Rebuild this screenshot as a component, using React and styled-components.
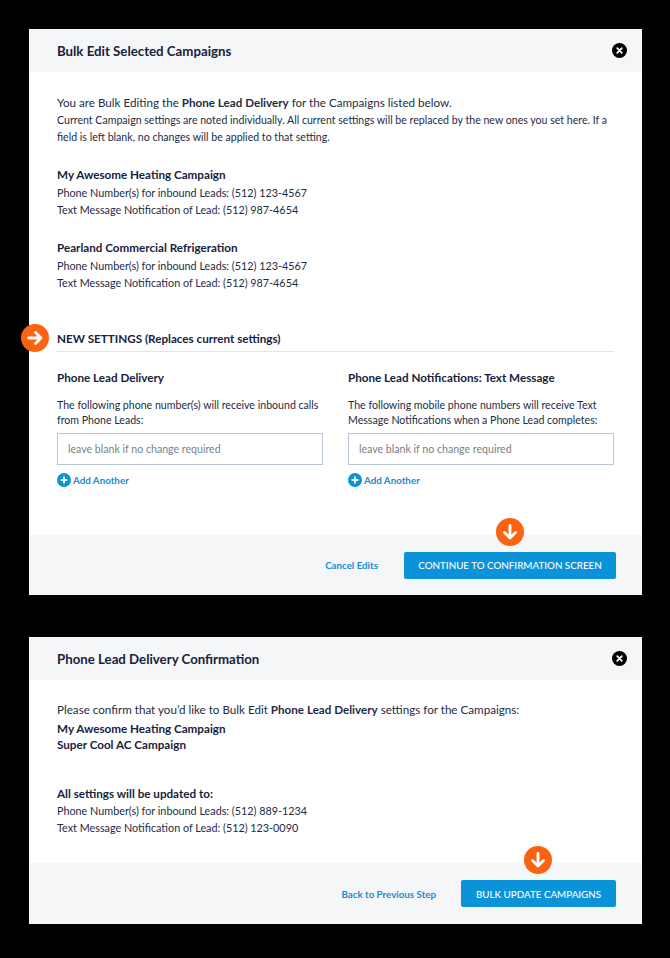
import React from "react";
import styled, { createGlobalStyle } from "styled-components";

const GlobalStyle = createGlobalStyle`
	html, body {
		margin: 0;
		padding: 0;
		background: #000;
	}
	body {
		font-family: Lato, "Open Sans", sans-serif;
		color: #1d2b45;
	}
`;

const Page = styled.main`
	width: 670px;
	height: 958px;
	box-sizing: border-box;
	padding: 29px 28px 0 29px;
	display: flex;
	flex-direction: column;
	gap: 42px;
	background: #000;
`;

const Modal = styled.section`
	position: relative;
	background: #fff;
	height: ${(p) => p.$height}px;
	display: flex;
	flex-direction: column;
`;

const Header = styled.header`
	height: 43px;
	flex: none;
	background: #f5f6f8;
	display: flex;
	align-items: center;
	justify-content: space-between;
	padding: 0 15px 0 28px;
`;

const Title = styled.h2`
	margin: 0;
	font-size: 13.25px;
	font-weight: 700;
	color: #16233d;
`;

const Body = styled.div`
	flex: 1;
	padding: ${(p) => p.$top}px 28px 0 28px;
`;

const Intro = styled.p`
	margin: 0;
	font-size: 11.65px;
	line-height: 18px;
	b {
		font-weight: 700;
	}
`;

const Note = styled.p`
	margin: 0;
	font-size: 10.6px;
	line-height: 17px;
	width: 556px;
`;

const Group = styled.div`
	margin-top: ${(p) => p.$top}px;
`;

const GroupName = styled.h3`
	margin: 0 0 ${(p) => p.$after ?? 1}px;
	font-size: 11.67px;
	line-height: 18px;
	font-weight: 700;
	color: #16233d;
`;

const CampaignName = styled.div`
	font-size: 11.67px;
	line-height: 16px;
	font-weight: 700;
	color: #16233d;
`;

const InfoLine = styled.div`
	font-size: 10.8px;
	line-height: 17px;
`;

const SectionHead = styled.h3`
	margin: 37px 0 0;
	padding-bottom: 3px;
	font-size: 11.67px;
	line-height: 20px;
	font-weight: 700;
	color: #16233d;
	border-bottom: 1px solid #e2e5ea;
`;

const Columns = styled.div`
	display: grid;
	grid-template-columns: 266px 266px;
	gap: 25px;
	margin-top: 16px;
`;

const FieldTitle = styled.h4`
	margin: 0 0 12px;
	font-size: 11.67px;
	line-height: 18px;
	font-weight: 700;
	color: #16233d;
`;

const FieldHelp = styled.p`
	margin: 0 0 5px;
	font-size: 10.6px;
	line-height: 15px;
`;

const Field = styled.input`
	display: block;
	width: 100%;
	height: 32px;
	box-sizing: border-box;
	border: 1px solid #b9c6d6;
	border-radius: 0;
	padding: 0 10px;
	font-family: inherit;
	font-size: 10.6px;
	outline: none;
	&::placeholder {
		color: #7a7f87;
		opacity: 1;
	}
`;

const AddLink = styled.a`
	display: flex;
	align-items: center;
	gap: 2px;
	margin-top: 8px;
	font-size: 9.8px;
	line-height: 14px;
	font-weight: 700;
	color: #1a8bd0;
`;

const Footer = styled.footer`
	flex: none;
	height: ${(p) => p.$height}px;
	background: #f5f6f8;
	display: flex;
	align-items: center;
	justify-content: flex-end;
	gap: ${(p) => p.$gap}px;
	padding: 0 26px 0 0;
`;

const TextLink = styled.a`
	font-size: 9.75px;
	font-weight: 700;
	color: #1a8bd0;
`;

const Primary = styled.button`
	height: 27px;
	width: ${(p) => p.$width}px;
	border: 0;
	border-radius: 2px;
	background: #0b93d9;
	color: #fff;
	font-family: inherit;
	font-size: 9.8px;
	font-weight: 500;
	padding: 0;
`;

const Badge = styled.span`
	position: absolute;
	left: ${(p) => p.$left}px;
	top: ${(p) => p.$top}px;
	width: 28px;
	height: 28px;
	line-height: 0;
`;

const CloseIcon = () => (
	<svg width="15" height="15" viewBox="0 0 15 15">
		<circle cx="7.5" cy="7.5" r="7.5" fill="#000" />
		<path d="M5.2 5.2l4.6 4.6M9.8 5.2l-4.6 4.6" stroke="#fff" strokeWidth="1.8" strokeLinecap="round" />
	</svg>
);

const PlusIcon = () => (
	<svg width="14" height="14" viewBox="0 0 14 14">
		<circle cx="7" cy="7" r="7" fill="#0b93d9" />
		<path d="M7 3.6v6.8M3.6 7h6.8" stroke="#fff" strokeWidth="1.8" />
	</svg>
);

const ArrowBadge = ({ left, top, down }) => (
	<Badge $left={left} $top={top}>
		<svg width="28" height="28" viewBox="0 0 28 28">
			<circle cx="14" cy="14" r="14" fill="#fb6312" />
			<g transform={down ? "rotate(90 14 14)" : undefined}>
				<path
					d="M7.5 14h12M14.5 8.5l5.5 5.5-5.5 5.5"
					fill="none"
					stroke="#fff"
					strokeWidth="2.8"
					strokeLinecap="round"
					strokeLinejoin="round"
				/>
			</g>
		</svg>
	</Badge>
);

const campaigns = [
	{ name: "My Awesome Heating Campaign", top: 19 },
	{ name: "Pearland Commercial Refrigeration", top: 20 },
];

const fields = [
	{
		title: "Phone Lead Delivery",
		help: "The following phone number(s) will receive inbound calls from Phone Leads:",
	},
	{
		title: "Phone Lead Notifications: Text Message",
		help: "The following mobile phone numbers will receive Text Message Notifications when a Phone Lead completes:",
	},
];

export default function App() {
	return (
		<Page>
			<GlobalStyle />
			<Modal $height={566}>
				<Header>
					<Title>Bulk Edit Selected Campaigns</Title>
					<CloseIcon />
				</Header>
				<Body $top={22}>
					<Intro>
						You are Bulk Editing the <b>Phone Lead Delivery</b> for the Campaigns listed below.
					</Intro>
					<Note>
						Current Campaign settings are noted individually. All current settings will be replaced by the new
						ones you set here. If a field is left blank, no changes will be applied to that setting.
					</Note>
					{campaigns.map((c) => (
						<Group key={c.name} $top={c.top}>
							<GroupName>{c.name}</GroupName>
							<InfoLine>Phone Number(s) for inbound Leads: (512) 123-4567</InfoLine>
							<InfoLine>Text Message Notification of Lead: (512) 987-4654</InfoLine>
						</Group>
					))}
					<SectionHead>NEW SETTINGS (Replaces current settings)</SectionHead>
					<Columns>
						{fields.map((f) => (
							<div key={f.title}>
								<FieldTitle>{f.title}</FieldTitle>
								<FieldHelp>{f.help}</FieldHelp>
								<Field placeholder="leave blank if no change required" />
								<AddLink>
									<PlusIcon />
									Add Another
								</AddLink>
							</div>
						))}
					</Columns>
				</Body>
				<Footer $height={60} $gap={26}>
					<TextLink>Cancel Edits</TextLink>
					<Primary $width={212}>CONTINUE TO CONFIRMATION SCREEN</Primary>
				</Footer>
				<ArrowBadge left={-8} top={295} />
				<ArrowBadge left={467} top={489} down />
			</Modal>
			<Modal $height={287}>
				<Header>
					<Title>Phone Lead Delivery Confirmation</Title>
					<CloseIcon />
				</Header>
				<Body $top={21}>
					<Intro>
						Please confirm that you’d like to Bulk Edit <b>Phone Lead Delivery</b> settings for the Campaigns:
					</Intro>
					<Group $top={1}>
						<CampaignName>My Awesome Heating Campaign</CampaignName>
						<CampaignName>Super Cool AC Campaign</CampaignName>
					</Group>
					<Group $top={32}>
						<GroupName $after={0}>All settings will be updated to:</GroupName>
						<InfoLine>Phone Number(s) for inbound Leads: (512) 889-1234</InfoLine>
						<InfoLine>Text Message Notification of Lead: (512) 123-0090</InfoLine>
					</Group>
				</Body>
				<Footer $height={61} $gap={25}>
					<TextLink>Back to Previous Step</TextLink>
					<Primary $width={155}>BULK UPDATE CAMPAIGNS</Primary>
				</Footer>
				<ArrowBadge left={495} top={209} down />
			</Modal>
		</Page>
	);
}
